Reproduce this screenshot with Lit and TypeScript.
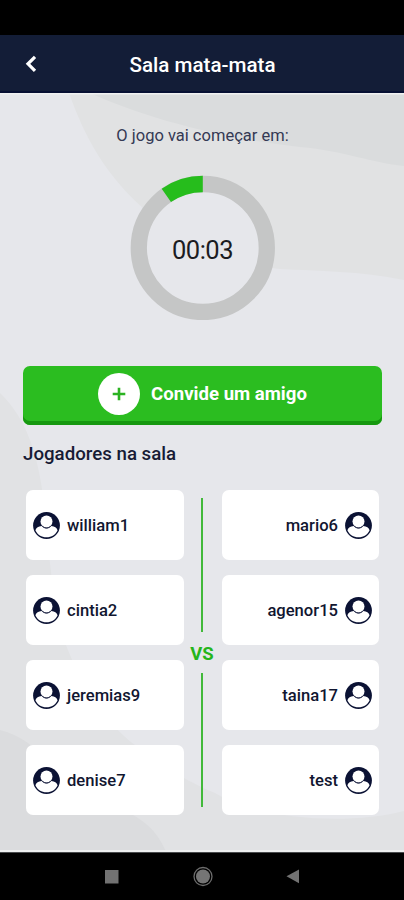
import { LitElement, html, css, svg } from "lit";
import { customElement, property } from "lit/decorators.js";

@customElement("player-card")
class PlayerCard extends LitElement {
  @property() name = "";
  @property({ type: Boolean, reflect: true }) reversed = false;

  static styles = css`
    :host {
      display: flex;
      align-items: center;
      gap: 7px;
      box-sizing: border-box;
      height: 70px;
      padding: 0 7px;
      background: #fff;
      border-radius: 7px;
    }
    :host([reversed]) {
      flex-direction: row-reverse;
    }
    .avatar {
      width: 27px;
      height: 27px;
      flex: none;
    }
    .name {
      font-size: 16.6px;
      font-weight: 500;
      line-height: 20px;
      color: #111630;
      padding-top: 2px;
    }
  `;

  render() {
    return html`
      <svg class="avatar" viewBox="0 0 27 27">
        <circle cx="13.5" cy="13.5" r="13.4" fill="#0b1234" />
        <path
          d="M2.4 18.2C3.2 15.6 5.4 14.3 8.6 14C10 15.6 11.6 16.4 13.5 16.4S17 15.6 18.4 14C21.6 14.3 23.8 15.6 24.6 18.2C22.7 22.6 18.5 25.3 13.5 25.3S4.3 22.6 2.4 18.2Z"
          fill="#fff"
        />
        <circle cx="13.5" cy="9.6" r="6" fill="#fff" />
        <path d="M8.8 13.6C11 16.9 16 16.9 18.2 13.6" fill="none" stroke="#3b415c" stroke-width="0.9" />
      </svg>
      <span class="name">${this.name}</span>
    `;
  }
}

@customElement("countdown-ring")
class CountdownRing extends LitElement {
  @property() time = "";
  @property({ type: Number }) fraction = 0;

  static styles = css`
    :host {
      display: grid;
      place-items: center;
      width: 145px;
      height: 145px;
    }
    .ring,
    .time {
      grid-area: 1 / 1;
    }
    .ring {
      width: 145px;
      height: 145px;
    }
    .time {
      font-size: 25.5px;
      line-height: 30px;
      letter-spacing: -0.5px;
      color: #1b1c22;
      padding-top: 4px;
    }
  `;

  render() {
    const r = 64;
    const length = 2 * Math.PI * r;
    const arc = length * this.fraction;
    return html`
      <svg class="ring" viewBox="0 0 145 145">
        ${svg`
          <circle cx="72.8" cy="73" r=${r} fill="#e6e7eb" stroke="#c5c6c6" stroke-width="16.3" />
          <circle cx="72.8" cy="73" r=${r} fill="none" stroke="#26bd1c" stroke-width="16.3"
            stroke-dasharray="${arc} ${length - arc}" stroke-dashoffset=${arc}
            transform="rotate(-90 72.8 73)" />
        `}
      </svg>
      <span class="time">${this.time}</span>
    `;
  }
}

@customElement("app-root")
class AppRoot extends LitElement {
  static styles = css`
    :host {
      display: flex;
      flex-direction: column;
      width: 404px;
      height: 900px;
      overflow: hidden;
      background: #000;
      font-family: Roboto, "Liberation Sans", sans-serif;
    }
    .status {
      height: 35px;
      flex: none;
    }
    .header {
      display: grid;
      grid-template-columns: 62px 1fr 61px;
      align-items: center;
      height: 58px;
      flex: none;
      box-sizing: border-box;
      background: #131d37;
      border-bottom: 2px solid #071033;
    }
    .back {
      justify-self: center;
      width: 14px;
      height: 20px;
      margin-top: 2px;
    }
    .title {
      margin: 0;
      padding-top: 4px;
      text-align: center;
      font-size: 20.6px;
      font-weight: 500;
      line-height: 24px;
      color: #fff;
    }
    .main {
      position: relative;
      display: flex;
      flex-direction: column;
      align-items: center;
      height: 759px;
      flex: none;
      box-sizing: border-box;
      padding: 0 22px 0 23px;
      background: #e6e7eb;
    }
    .backdrop {
      position: absolute;
      inset: 0;
      width: 404px;
      height: 759px;
    }
    .main > :not(.backdrop) {
      z-index: 1;
    }
    .lead {
      margin: 32px 0 0;
      font-size: 16.5px;
      line-height: 22px;
      color: #343954;
    }
    .ring {
      margin-top: 28px;
    }
    .invite {
      display: flex;
      align-items: center;
      justify-content: center;
      gap: 11px;
      width: 100%;
      height: 59px;
      margin-top: 46px;
      padding: 0 0 4px;
      border: 0;
      border-radius: 7px;
      background: #2bbd20;
      box-shadow: inset 0 -4px 0 #16980f;
      font: 700 18.6px/24px Roboto, "Liberation Sans", sans-serif;
      color: #fff;
    }
    .plus {
      width: 42px;
      height: 42px;
    }
    .subtitle {
      align-self: flex-start;
      margin: 17px 0 0;
      font-size: 18.7px;
      font-weight: 500;
      line-height: 24px;
      color: #171b35;
    }
    .match {
      display: grid;
      grid-template-columns: 158px 1fr 157px;
      width: 353px;
      margin-top: 24px;
    }
    .team {
      display: flex;
      flex-direction: column;
      gap: 15px;
    }
    .versus {
      display: flex;
      flex-direction: column;
      align-items: center;
      padding: 8px 2px 8px 0;
    }
    .line {
      width: 2.5px;
      flex: 1;
      background: #42b93a;
    }
    .vs {
      height: 41px;
      font-size: 18.5px;
      font-weight: 700;
      line-height: 44px;
      color: #25b51b;
    }
    .nav {
      display: flex;
      flex: 1;
      align-items: center;
      justify-content: center;
      border-top: 1px solid #4a4c4e;
      box-sizing: border-box;
    }
    .keys {
      width: 404px;
      height: 47px;
    }
  `;

  private left = ["william1", "cintia2", "jeremias9", "denise7"];
  private right = ["mario6", "agenor15", "taina17", "test"];

  render() {
    return html`
      <div class="status"></div>
      <header class="header">
        <svg class="back" viewBox="0 0 14 20">
          <path d="M11 2.8L4 9.8L11 16.8" fill="none" stroke="#fff" stroke-width="3.2" />
        </svg>
        <h1 class="title">Sala mata-mata</h1>
      </header>
      <main class="main">
        <svg class="backdrop" viewBox="0 0 404 759">
          <path d="M69 0C84 42 105 84 151 122C190 156 236 173 280 176C318 178 360 178 404 187V0Z" fill="#e1e2e3" />
          <path d="M90 0C145 25 220 45 300 54C345 58 372 70 404 73V0Z" fill="#dadcdd" />
          <path d="M0 300C26 325 38 360 44 410C50 465 52 520 70 562C88 605 112 635 135 652C165 675 190 690 215 700C262 728 350 732 404 718V759H0Z" fill="#e1e2e4" />
          <path d="M0 637C40 646 60 690 100 708C130 718 155 730 166 759H0Z" fill="#dbdcde" />
          <path d="M0 0.7H404" stroke="#f0f1f2" stroke-width="1.4" />
          <path d="M0 758H404" stroke="#eff0f0" stroke-width="2" />
        </svg>
        <p class="lead">O jogo vai começar em:</p>
        <countdown-ring class="ring" time="00:03" .fraction=${0.098}></countdown-ring>
        <button class="invite">
          <svg class="plus" viewBox="0 0 42 42">
            <circle cx="21" cy="21" r="21" fill="#fff" />
            <path d="M21 14.7V27.3M14.7 21H27.3" stroke="#2bb321" stroke-width="2.6" />
          </svg>
          <span>Convide um amigo</span>
        </button>
        <h2 class="subtitle">Jogadores na sala</h2>
        <section class="match">
          <div class="team">
            ${this.left.map((n) => html`<player-card name=${n}></player-card>`)}
          </div>
          <div class="versus">
            <div class="line"></div>
            <div class="vs">VS</div>
            <div class="line"></div>
          </div>
          <div class="team">
            ${this.right.map((n) => html`<player-card name=${n} reversed></player-card>`)}
          </div>
        </section>
      </main>
      <nav class="nav">
        <svg class="keys" viewBox="0 0 404 47">
          <rect x="105" y="17" width="13.5" height="13.5" fill="#727272" />
          <circle cx="203" cy="23.5" r="9" fill="none" stroke="#6d6d6d" stroke-width="1.3" />
          <circle cx="203" cy="23.5" r="7" fill="#757575" />
          <path d="M286.5 23.3L299 16.5V30.3Z" fill="#727272" />
        </svg>
      </nav>
    `;
  }
}
